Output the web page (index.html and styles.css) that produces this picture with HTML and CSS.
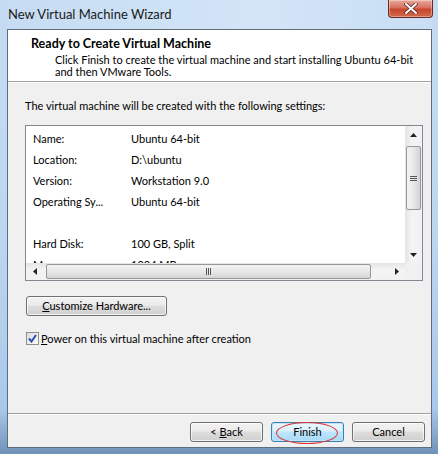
FILE: index.html
```html
<!DOCTYPE html>
<html>
<head>
<meta charset="utf-8">
<link rel="stylesheet" href="styles.css">
</head>
<body>
<div class="window">
  <div class="titlebar">
    <span class="title">New Virtual Machine Wizard</span>
    <div class="close">
      <svg width="18" height="11" viewBox="0 0 18 11"><path d="M4 1 L14 10 M14 1 L4 10" stroke="#5a2a2a" stroke-width="3.6" stroke-linecap="round"/><path d="M4 1 L14 10 M14 1 L4 10" stroke="#ffffff" stroke-width="2" stroke-linecap="round"/></svg>
    </div>
  </div>
  <div class="client">
    <div class="header">
      <div class="h-title">Ready to Create Virtual Machine</div>
      <div class="h-sub">Click Finish to create the virtual machine and start installing Ubuntu 64-bit<br>and then VMware Tools.</div>
    </div>
    <div class="content">
      <p class="intro">The virtual machine will be created with the following settings:</p>
      <div class="listbox">
        <div class="list-main">
          <div class="rows">
            <div class="row"><span class="k">Name:</span><span class="v">Ubuntu 64-bit</span></div>
            <div class="row"><span class="k">Location:</span><span class="v">D:\ubuntu</span></div>
            <div class="row"><span class="k">Version:</span><span class="v">Workstation 9.0</span></div>
            <div class="row"><span class="k">Operating Sy...</span><span class="v">Ubuntu 64-bit</span></div>
            <div class="row"><span class="k"></span><span class="v"></span></div>
            <div class="row"><span class="k">Hard Disk:</span><span class="v">100 GB, Split</span></div>
            <div class="row"><span class="k">Memory:</span><span class="v">1024 MB</span></div>
          </div>
          <div class="vscroll">
            <div class="arrow-btn"><svg width="7" height="4" viewBox="0 0 7 4"><path d="M0 4 L3.5 0 L7 4Z" fill="#222"/></svg></div>
            <div class="vtrack">
              <div class="vthumb"><span class="grip-v"></span></div>
            </div>
            <div class="arrow-btn"><svg width="7" height="4" viewBox="0 0 7 4"><path d="M0 0 L3.5 4 L7 0Z" fill="#222"/></svg></div>
          </div>
        </div>
        <div class="hscroll-row">
          <div class="hscroll">
            <div class="harrow"><svg width="4" height="7" viewBox="0 0 4 7"><path d="M4 0 L0 3.5 L4 7Z" fill="#222"/></svg></div>
            <div class="htrack">
              <div class="hthumb"><span class="grip-h"></span></div>
            </div>
            <div class="harrow"><svg width="4" height="7" viewBox="0 0 4 7"><path d="M0 0 L4 3.5 L0 7Z" fill="#222"/></svg></div>
          </div>
          <div class="corner"></div>
        </div>
      </div>
      <button class="btn custom"><u>C</u>ustomize Hardware...</button>
      <label class="check"><span class="box"><svg width="9" height="9" viewBox="0 0 9 9"><path d="M1 4.5 L3.5 7.5 L8 1" stroke="#2a4fa8" stroke-width="2" fill="none"/></svg></span><span><u>P</u>ower on this virtual machine after creation</span></label>
    </div>
    <div class="footer">
      <button class="btn">&lt; <u>B</u>ack</button>
      <div class="finish-wrap">
        <button class="btn default">Finish</button>
        <span class="ring"></span>
      </div>
      <button class="btn">Cancel</button>
    </div>
  </div>
</div>
</body>
</html>
```

FILE: styles.css
```css
html, body {
  margin: 0;
  padding: 0;
}
body {
  width: 439px;
  height: 454px;
  overflow: hidden;
  font-family: Lato, "Noto Sans", sans-serif;
  font-size: 11px;
  color: #000;
}
.window {
  box-sizing: border-box;
  width: 439px;
  height: 454px;
  padding: 0 6px 6px 7px;
  display: flex;
  flex-direction: column;
  background: linear-gradient(to bottom, #c4dbf3 0%, #bed7f1 50%, #a9c8ea 90%, #6f92b8 100%);
  border-left: 1px solid #7f9dbf;
  margin-left: -1px;
}
.titlebar {
  height: 29px;
  flex: none;
  display: flex;
  align-items: flex-start;
  justify-content: space-between;
  background: linear-gradient(to right, #c6dcf3, #d3e5f7 60%, #c9def4);
}
.title {
  margin-top: 6px;
  margin-left: 1px;
  font-size: 13px;
  line-height: 16px;
  color: #1a1a1a;
}
.close {
  width: 45px;
  height: 18px;
  margin-right: -1px;
  box-sizing: border-box;
  border: 1px solid #6b2a22;
  border-top: none;
  border-radius: 0 0 4px 4px;
  background: linear-gradient(to bottom, #e9a99c 0%, #d7705f 45%, #c7462f 55%, #d06a4c 100%);
  display: flex;
  align-items: center;
  justify-content: center;
  box-shadow: inset 0 0 0 1px rgba(255,255,255,0.35);
}
.client {
  flex: 1;
  display: flex;
  flex-direction: column;
  border: 1px solid #5f6c7c;
  background: #f0f0f0;
  min-height: 0;
}
.header {
  height: 51px;
  flex: none;
  background: #fff;
  border-bottom: 1px solid #a0a0a0;
  box-sizing: content-box;
  padding-left: 23px;
  white-space: nowrap;
}
.h-title {
  font-weight: bold;
  font-size: 12.5px;
  margin-top: 6px;
  line-height: 15px;
}
.h-sub {
  margin-left: 24px;
  margin-top: 3px;
  line-height: 12px;
}
.content {
  flex: 1;
  padding: 0 0 0 17px;
  border-top: 1px solid #fff;
}
.intro {
  margin: 15px 0 0 0;
  line-height: 15px;
}
.listbox {
  margin-top: 12px;
  width: 396px;
  height: 154px;
  border: 1px solid #828790;
  background: #fff;
  display: flex;
  flex-direction: column;
}
.list-main {
  height: 137px;
  display: flex;
  overflow: hidden;
}
.rows {
  flex: 1;
  padding: 2px 0 0 7px;
  overflow: hidden;
}
.row {
  display: flex;
  height: 21px;
  line-height: 21px;
}
.k {
  width: 98px;
  flex: none;
}
.vscroll {
  width: 17px;
  flex: none;
  display: flex;
  flex-direction: column;
  background: linear-gradient(to right, #e4e4e4, #f4f4f4 40%, #f1f1f1);
}
.arrow-btn {
  height: 17px;
  flex: none;
  display: flex;
  align-items: center;
  justify-content: center;
}
.vtrack {
  flex: 1;
  padding-top: 3px;
}
.vthumb {
  box-sizing: border-box;
  width: 15px;
  margin-left: 1px;
  height: 64px;
  border: 1px solid #979797;
  border-radius: 2px;
  background: linear-gradient(to right, #f3f3f3, #e8e8e8 50%, #d4d4d4);
  display: flex;
  align-items: center;
  justify-content: center;
}
.grip-v {
  width: 7px;
  height: 5px;
  border-top: 1px solid #555;
  border-bottom: 1px solid #555;
  box-sizing: border-box;
  background: linear-gradient(#555, #555) center / 7px 1px no-repeat;
}
.hscroll-row {
  height: 17px;
  display: flex;
}
.hscroll {
  flex: 1;
  display: flex;
  background: linear-gradient(to bottom, #e4e4e4, #f4f4f4 40%, #f1f1f1);
}
.harrow {
  width: 17px;
  flex: none;
  display: flex;
  align-items: center;
  justify-content: center;
}
.htrack {
  flex: 1;
  padding-left: 3px;
  padding-right: 17px;
}
.hthumb {
  box-sizing: border-box;
  height: 15px;
  margin-top: 1px;
  border: 1px solid #979797;
  border-radius: 2px;
  background: linear-gradient(to bottom, #f3f3f3, #e8e8e8 50%, #d4d4d4);
  display: flex;
  align-items: center;
  justify-content: center;
}
.grip-h {
  width: 5px;
  height: 7px;
  box-sizing: border-box;
  border-left: 1px solid #555;
  border-right: 1px solid #555;
  background: linear-gradient(#555, #555) center / 1px 7px no-repeat;
}
.corner {
  width: 17px;
  background: #f0f0f0;
}
.btn {
  font-family: inherit;
  font-size: 11px;
  color: #000;
  height: 20px;
  padding: 0;
  box-sizing: border-box;
  border: 1px solid #707070;
  border-radius: 3px;
  background: linear-gradient(to bottom, #f2f2f2 0%, #ebebeb 45%, #dddddd 50%, #cfcfcf 100%);
  box-shadow: inset 0 0 0 1px rgba(255,255,255,0.7);
  line-height: 16px;
}
.custom {
  display: block;
  margin-top: 15px;
  margin-left: 1px;
  width: 141px;
}
.check {
  display: flex;
  align-items: center;
  margin-top: 15px;
  margin-left: 1px;
  line-height: 15px;
}
.box {
  width: 13px;
  height: 13px;
  box-sizing: border-box;
  border: 1px solid #8e8f8f;
  background: linear-gradient(135deg, #dcdcdc, #fdfdfd);
  display: flex;
  align-items: center;
  justify-content: center;
  margin-right: 2px;
}
.footer {
  flex: none;
  height: 34px;
  border-top: 1px solid #a0a0a0;
  box-shadow: inset 0 1px 0 #fff;
  display: flex;
  justify-content: flex-end;
  align-items: flex-start;
  gap: 8px;
  padding: 8px 6px 0 0;
  box-sizing: border-box;
}
.footer .btn {
  width: 73px;
}
.finish-wrap {
  position: relative;
}
.default {
  border-color: #3c7fb1;
  background: linear-gradient(to bottom, #eaf6fd 0%, #d9f0fc 45%, #bee6fd 50%, #a7d9f5 100%);
  box-shadow: inset 0 0 0 1px #c3e4f9;
}
.ring {
  position: absolute;
  left: 5px;
  top: 0px;
  width: 62px;
  height: 22px;
  box-sizing: border-box;
  border: 1px solid #e0342e;
  border-radius: 50%;
  pointer-events: none;
}
```
